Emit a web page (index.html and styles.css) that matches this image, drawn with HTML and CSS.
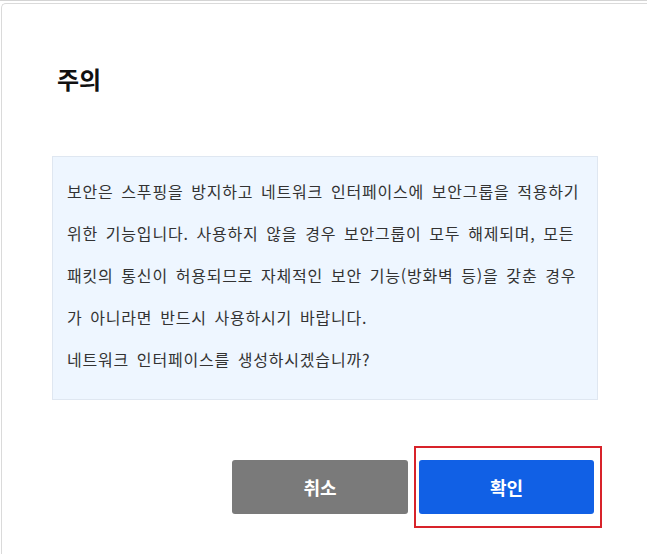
FILE: index.html
```html
<!DOCTYPE html>
<html lang="ko">
<head>
<meta charset="utf-8">
<link rel="stylesheet" href="styles.css">
</head>
<body>
<div class="backdrop">
  <div class="modal">
    <h2 class="title">주의</h2>
    <div class="notice">
      <p class="para">보안은 스푸핑을 방지하고 네트워크 인터페이스에 보안그룹을 적용하기 위한 기능입니다. 사용하지 않을 경우 보안그룹이 모두 해제되며, 모든 패킷의 통신이 허용되므로 자체적인 보안 기능(방화벽 등)을 갖춘 경우가 아니라면 반드시 사용하시기 바랍니다.</p>
      <p class="para">네트워크 인터페이스를 생성하시겠습니까?</p>
    </div>
    <div class="actions">
      <button class="btn btn-cancel">취소</button>
      <div class="highlight-wrap">
        <button class="btn btn-ok">확인</button>
        <span class="highlight"></span>
      </div>
    </div>
  </div>
</div>
</body>
</html>
```

FILE: styles.css
```css
html, body {
  margin: 0;
  padding: 0;
  background: #ffffff;
  overflow: hidden;
}
body {
  font-family: "Noto Sans CJK KR", "Noto Sans", sans-serif;
  width: 647px;
  height: 557px;
}
.backdrop {
  border-top: 1px solid #d4d4d4;
  padding: 2px 0 0 1px;
  height: 554px;
  box-sizing: border-box;
  overflow: hidden;
}
.modal {
  border: 1px solid #dadada;
  border-right: none;
  border-bottom: none;
  border-radius: 5px 0 0 0;
  height: 560px;
  padding: 0 48px 0 50px;
  background: #ffffff;
}
.title {
  margin: 0;
  padding: 57px 0 0 5px;
  font-size: 24px;
  line-height: 36px;
  font-weight: 700;
  color: #111111;
}
.notice {
  margin-top: 59px;
  width: 546px;
  height: 244px;
  box-sizing: border-box;
  background: #eef6ff;
  border: 1px solid #dfe7f1;
  padding: 13px 12px 0 14px;
}
.para {
  margin: 0;
  font-size: 16px;
  line-height: 42px;
  letter-spacing: 0.8px;
  word-spacing: 2.5px;
  color: #333333;
}
.actions {
  margin-top: 60px;
  display: flex;
  justify-content: flex-end;
  gap: 11px;
  width: 542px;
}
.btn {
  width: 176px;
  height: 54px;
  border: none;
  border-radius: 3px;
  font-family: "Noto Sans CJK KR", "Noto Sans", sans-serif;
  font-size: 18px;
  font-weight: 700;
  color: #ffffff;
  padding: 0;
}
.btn-cancel {
  background: #7a7a7a;
}
.btn-ok {
  width: 175px;
  background: #1160e5;
}
.highlight-wrap {
  position: relative;
  display: flex;
}
.highlight {
  position: absolute;
  left: -5px;
  top: -14px;
  right: -8px;
  bottom: -14px;
  border: 2px solid #d8232a;
}
```
